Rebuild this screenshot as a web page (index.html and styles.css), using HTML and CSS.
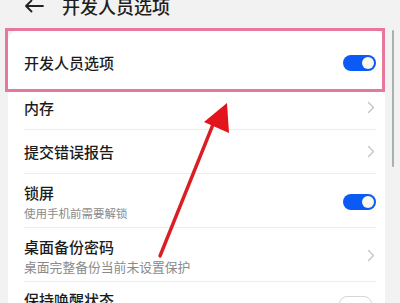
FILE: index.html
```html
<!DOCTYPE html>
<html lang="zh">
<head>
<meta charset="utf-8">
<link rel="stylesheet" href="styles.css">
</head>
<body>
<div class="screen">
  <header class="header">
    <div class="header-row">
      <svg class="back" width="20" height="14" viewBox="0 0 20 14"><path d="M19 7H2M7.5 1.5L2 7l5.5 5.5" fill="none" stroke="#222" stroke-width="1.8" stroke-linecap="round" stroke-linejoin="round"/></svg>
      <span class="title">开发人员选项</span>
    </div>
  </header>
  <div class="card">
    <div class="row row-first">
      <div class="text"><div class="label">开发人员选项</div></div>
      <span class="toggle on"></span>
    </div>
    <div class="row row-hidden-line">
      <div class="text"><div class="label">内存</div></div>
      <svg class="chev" width="8" height="13" viewBox="0 0 8 13"><path d="M1.5 1.5l5 5-5 5" fill="none" stroke="#c4c4c4" stroke-width="1.4" stroke-linecap="round" stroke-linejoin="round"/></svg>
    </div>
    <div class="row">
      <div class="text"><div class="label">提交错误报告</div></div>
      <svg class="chev" width="8" height="13" viewBox="0 0 8 13"><path d="M1.5 1.5l5 5-5 5" fill="none" stroke="#c4c4c4" stroke-width="1.4" stroke-linecap="round" stroke-linejoin="round"/></svg>
    </div>
    <div class="row row-two">
      <div class="text"><div class="label">锁屏</div><div class="sub sub-narrow">使用手机前需要解锁</div></div>
      <span class="toggle on"></span>
    </div>
    <div class="row row-two">
      <div class="text"><div class="label">桌面备份密码</div><div class="sub">桌面完整备份当前未设置保护</div></div>
      <svg class="chev" width="8" height="13" viewBox="0 0 8 13"><path d="M1.5 1.5l5 5-5 5" fill="none" stroke="#c4c4c4" stroke-width="1.4" stroke-linecap="round" stroke-linejoin="round"/></svg>
    </div>
    <div class="row row-last">
      <div class="text"><div class="label">保持唤醒状态</div></div>
      <span class="toggle off"></span>
    </div>
  </div>
  <div class="highlight"></div>
  <div class="scrollbar"></div>
  <svg class="pointer" width="400" height="303" viewBox="0 0 400 303">
    <line x1="160" y1="256" x2="214" y2="122" stroke="#d91f24" stroke-width="3.4" stroke-linecap="round"/>
    <polygon points="227,103 204,122 229,133" fill="#e3141c"/>
  </svg>
</div>
</body>
</html>
```
FILE: styles.css
```css
html, body {
  margin: 0;
  padding: 0;
}
body {
  background: #f2f2f2;
  font-family: "Noto Sans CJK SC", "Noto Sans", sans-serif;
  color: #1b1b1b;
}
.screen {
  position: relative;
  width: 400px;
  height: 303px;
  overflow: hidden;
  background: #f2f2f2;
}
.header {
  display: flex;
  align-items: flex-start;
  height: 30px;
}
.header-row {
  display: flex;
  align-items: center;
  height: 22px;
  margin-top: -5px;
  padding-left: 24px;
}
.back {
  display: block;
}
.title {
  margin-left: 18px;
  font-size: 18px;
  font-weight: 500;
  line-height: 22px;
  color: #1e1e1e;
}
.card {
  margin: 0 15px 0 8px;
  background: #fff;
  border-radius: 12px 12px 0 0;
  padding: 11px 9px 0 16px;
}
.row {
  display: flex;
  align-items: center;
  justify-content: space-between;
  height: 44px;
  box-sizing: border-box;
  border-top: 1px solid #ececec;
}
.row-first {
  border-top: none;
}
.row-hidden-line {
  border-top-color: #fff;
}
.row-two {
  height: 54px;
  padding: 9px 0 7px;
  align-items: center;
}
.label {
  font-size: 15px;
  font-weight: 500;
  line-height: 20px;
  color: #1b1b1b;
}
.sub {
  font-size: 12.8px;
  line-height: 16px;
  margin-top: 2px;
  color: #8a8a8a;
}
.sub-narrow {
  font-size: 11.5px;
}
.row-last {
  align-items: flex-start;
  padding-top: 8px;
}
.chev {
  display: block;
  margin-right: 1px;
}
.toggle {
  position: relative;
  display: block;
  width: 33px;
  height: 16px;
  border-radius: 8px;
  box-sizing: border-box;
}
.toggle.on {
  background: #0b5af5;
}
.toggle.on::after {
  content: "";
  position: absolute;
  right: 2px;
  top: 2px;
  width: 12px;
  height: 12px;
  border-radius: 50%;
  background: radial-gradient(circle at 40% 40%, #fffdf0, #f3f3e8);
}
.toggle.off {
  border: 1.5px solid #d6d6d6;
  background: #fff;
  margin-top: 6px;
  margin-right: 4px;
}
.highlight {
  position: absolute;
  left: 5px;
  top: 28px;
  width: 380px;
  height: 64px;
  box-sizing: border-box;
  border: 3px solid #e6779d;
}
.scrollbar {
  position: absolute;
  left: 392px;
  top: 30px;
  width: 2px;
  height: 137px;
  background: #a5b2ad;
  border-radius: 1px;
}
.pointer {
  position: absolute;
  left: 0;
  top: 0;
}
```
